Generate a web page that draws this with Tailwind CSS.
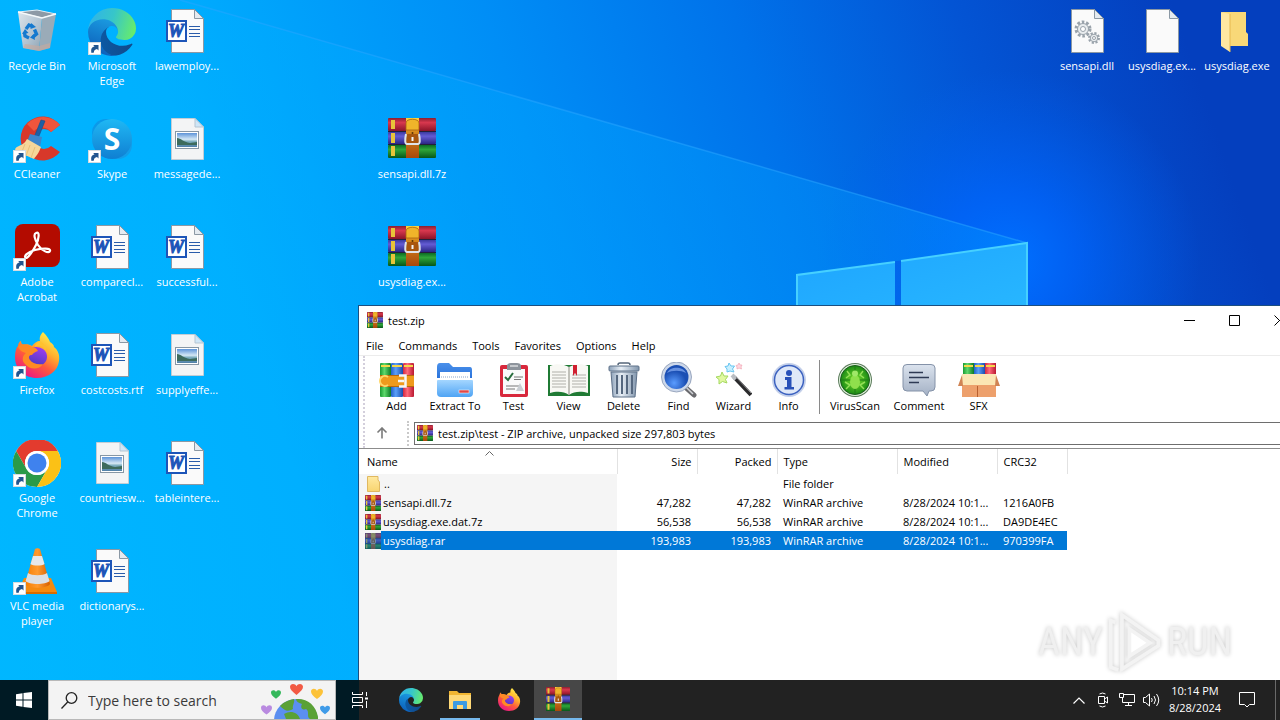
<!DOCTYPE html>
<html lang="en">
<head>
  <meta charset="UTF-8">
  <title>Desktop</title>
  <script src="https://cdn.jsdelivr.net/npm/@tailwindcss/browser@4"></script>
</head>
<body class="h-screen flex flex-col overflow-hidden bg-[#00aeff] font-['Open_Sans',sans-serif] text-[11px] leading-[15px] text-black">

  <!-- Icon sprite -->
  <svg width="0" height="0" class="absolute" aria-hidden="true">
    <defs>
      <linearGradient id="edgeGreen" x1="0" y1="0.3" x2="1" y2="0.5"><stop offset="0" stop-color="#2fb3ea"/><stop offset=".5" stop-color="#37c6c9"/><stop offset="1" stop-color="#66eb6e"/></linearGradient>
      <linearGradient id="edgeBlue" x1="0.6" y1="0" x2="0.3" y2="1"><stop offset="0" stop-color="#1b9de2"/><stop offset="1" stop-color="#0c5cb8"/></linearGradient>
      <linearGradient id="edgeDark" x1="0" y1="0.5" x2="1" y2="0.5"><stop offset="0" stop-color="#0c59a4"/><stop offset="1" stop-color="#114a8b"/></linearGradient>
      <linearGradient id="ffBody" x1="0.85" y1="0.05" x2="0.25" y2="1"><stop offset="0" stop-color="#fff44f"/><stop offset=".35" stop-color="#ffb02e"/><stop offset=".62" stop-color="#ff5a3c"/><stop offset="1" stop-color="#e8128a"/></linearGradient>
      <linearGradient id="ffCore" x1="0.7" y1="0" x2="0.3" y2="1"><stop offset="0" stop-color="#a03cf0"/><stop offset="1" stop-color="#4a3ac0"/></linearGradient>
      <linearGradient id="bookRed" x2="0" y2="1"><stop offset="0" stop-color="#8c1f30"/><stop offset=".35" stop-color="#d8384e"/><stop offset="1" stop-color="#8c1428"/></linearGradient>
      <linearGradient id="bookBlue" x2="0" y2="1"><stop offset="0" stop-color="#3a3aa0"/><stop offset=".35" stop-color="#645cd4"/><stop offset="1" stop-color="#2b2684"/></linearGradient>
      <linearGradient id="bookGreen" x2="0" y2="1"><stop offset="0" stop-color="#0b6b24"/><stop offset=".35" stop-color="#2fa63a"/><stop offset="1" stop-color="#07561a"/></linearGradient>
      <linearGradient id="belt" x2="0" y2="1"><stop offset="0" stop-color="#ffd23c"/><stop offset=".35" stop-color="#d88a1c"/><stop offset="1" stop-color="#a8480c"/></linearGradient>
      <linearGradient id="binSide" x2="1" y2="1"><stop offset="0" stop-color="#dde5eb"/><stop offset=".6" stop-color="#b0c2d0"/><stop offset="1" stop-color="#8fa2b2"/></linearGradient>
      <linearGradient id="skype" x2="0" y2="1"><stop offset="0" stop-color="#20b8f4"/><stop offset="1" stop-color="#0f7fd2"/></linearGradient>
      <linearGradient id="photo" x2="0" y2="1"><stop offset="0" stop-color="#5d93d8"/><stop offset=".45" stop-color="#d5e8f5"/><stop offset=".6" stop-color="#7fb0c0"/><stop offset="1" stop-color="#4f7fa8"/></linearGradient>
      <linearGradient id="cone" x2="1" y2="0"><stop offset="0" stop-color="#f57c00"/><stop offset=".5" stop-color="#ff9a2e"/><stop offset="1" stop-color="#d65f00"/></linearGradient>
      <linearGradient id="extract" x2="0" y2="1"><stop offset="0" stop-color="#4a90ea"/><stop offset="1" stop-color="#2b74dc"/></linearGradient>
      <linearGradient id="extractFront" x2="0" y2="1"><stop offset="0" stop-color="#a4d6ff"/><stop offset="1" stop-color="#4fa4f4"/></linearGradient>
      <linearGradient id="metal" x2="1" y2="0"><stop offset="0" stop-color="#8fa3ba"/><stop offset=".4" stop-color="#e8eff6"/><stop offset="1" stop-color="#8195ac"/></linearGradient>
      <linearGradient id="bubble" x2="0" y2="1"><stop offset="0" stop-color="#dbe3ee"/><stop offset="1" stop-color="#a3b0c4"/></linearGradient>
      <radialGradient id="lens" cx=".4" cy=".75"><stop offset="0" stop-color="#5a9cff"/><stop offset="1" stop-color="#1b4fb4"/></radialGradient>
      <radialGradient id="scan"><stop offset="0" stop-color="#7be22a"/><stop offset="1" stop-color="#1b8a16"/></radialGradient>
      <linearGradient id="tubeG" x2="1" y2="0"><stop offset="0" stop-color="#1a9a32"/><stop offset=".4" stop-color="#5fd86c"/><stop offset="1" stop-color="#0d7a24"/></linearGradient>
      <linearGradient id="tubeB" x2="1" y2="0"><stop offset="0" stop-color="#2460c8"/><stop offset=".4" stop-color="#5ca0f8"/><stop offset="1" stop-color="#1a4cae"/></linearGradient>
      <linearGradient id="tubeR" x2="1" y2="0"><stop offset="0" stop-color="#d02840"/><stop offset=".4" stop-color="#ff6a7c"/><stop offset="1" stop-color="#b81830"/></linearGradient>
      <linearGradient id="gold" x2="0" y2="1"><stop offset="0" stop-color="#ffe9a0"/><stop offset="1" stop-color="#f8d470"/></linearGradient>
    </defs>

    <symbol id="shortcut" viewBox="0 0 13 13">
      <rect x=".5" y=".5" width="12" height="12" fill="#fff" stroke="#d5dbe0"/>
      <path d="M3.500 11C2.500 7 4 5 6.500 4.600L5.200 3H10.500V8.500L9 7C7 7.400 5.600 8.600 6 10.500Z" fill="#22558f"/>
    </symbol>

    <symbol id="recycle" viewBox="0 0 48 48">
      <path d="M5 4L24 2L43 6L29 10Z" fill="#8d9aa6" stroke="#e6edf2"/>
      <path d="M5 4L29 10L26 43L10 40Z" fill="url(#binSide)"/>
      <path d="M29 10L43 6L37 40L26 43Z" fill="#9aabb8"/>
      <path d="M12 36L26 38L37 35L37 40L26 43L10 40Z" fill="#c9aa9c" opacity=".6"/>
      <path d="M5 4L29 10L43 6" fill="none" stroke="#f5f9fb" stroke-width="1.500"/>
      <g fill="none" stroke="#1479cf" stroke-width="3.400">
        <path d="M13 21L16 17L19.500 18.500"/><path d="M21.500 21.500L23.500 26L20 29"/><path d="M16 30L12 28L11.500 24"/>
      </g>
      <path d="M18 15L23 19L17.500 21ZM22 32L17 29.500L21 26ZM9 26L12 21L15.500 25Z" fill="#1479cf"/>
    </symbol>

    <symbol id="edge" viewBox="0 0 256 256">
      <g transform="translate(-4.630 -4.920)">
        <path fill="url(#edgeDark)" d="M235.680,195.460a93.730,93.730,0,0,1-10.540,4.710,101.870,101.870,0,0,1-35.900,6.460c-47.320,0-88.540-32.550-88.540-74.320A31.480,31.480,0,0,1,117.130,105c-42.800,1.800-53.800,46.400-53.800,72.530,0,73.880,68.090,81.370,82.760,81.370,7.910,0,19.840-2.300,27-4.560l1.310-.44A128.340,128.340,0,0,0,241,201.100,4,4,0,0,0,235.680,195.460Z"/>
        <path fill="url(#edgeBlue)" d="M110.340,246.340A79.200,79.200,0,0,1,87.600,225,80.720,80.720,0,0,1,117.130,105c3.120-1.470,8.450-4.130,15.540-4a32.350,32.350,0,0,1,25.690,13,31.880,31.880,0,0,1,6.360,18.660c0-.21,24.460-79.600-80-79.600-43.900,0-80,41.660-80,78.210a130.150,130.150,0,0,0,12.110,56,128,128,0,0,0,156.380,67.110,75.550,75.550,0,0,1-62.780-8Z"/>
        <path fill="url(#edgeGreen)" d="M156.940,153.780c-.81,1.050-3.300,2.500-3.300,5.660,0,2.610,1.700,5.120,4.720,7.230,14.380,10,41.490,8.680,41.560,8.680A59.560,59.560,0,0,0,230.180,167a61.380,61.380,0,0,0,30.430-52.880c.26-22.410-8-37.310-11.340-43.910C228.090,28.760,182.350,5,132.610,5a128,128,0,0,0-128,126.200C5.090,94.650,41.360,65.130,84.630,65.130c3.510,0,23.460.34,42,10.070,16.340,8.580,24.900,18.940,30.850,29.210,6.180,10.670,7.280,24.150,7.280,29.520S162,147.200,156.940,153.780Z"/>
      </g>
    </symbol>

    <symbol id="page" viewBox="0 0 48 48">
      <path d="M8.500 1.500H31.500L40.500 10.500V44.500H8.500Z" fill="#fafafa" stroke="#8b98a4"/>
      <path d="M31.500 1.500V10.500H40.500Z" fill="#e4eaf0" stroke="#8b98a4"/>
    </symbol>

    <symbol id="word" viewBox="0 0 48 48">
      <use href="#page"/>
      <rect x="3" y="12" width="21" height="22" fill="#1d55b8"/>
      <rect x="5" y="14" width="17" height="18" fill="#fff"/>
      <path d="M26 18.500H37M26 21.500H37M26 25.500H37M26 28.500H37" stroke="#2a5caa"/>
    </symbol>

    <symbol id="picture" viewBox="0 0 48 48">
      <path d="M8.500 2.500H32L40.500 11V43.500H8.500Z" fill="#f3f4f5" stroke="#c3cdd5"/>
      <path d="M32 2.500V11H40.500Z" fill="#cfe6f7" stroke="#b5c5d2"/>
      <rect x="12.500" y="15.500" width="23" height="17" fill="#fff" stroke="#8797a5"/>
      <rect x="14" y="17" width="20" height="14" fill="url(#photo)"/>
      <path d="M14 22C18 22 20 26 27 27L34 26V29H14Z" fill="#3d6b5c"/>
    </symbol>

    <symbol id="ccleaner" viewBox="0 0 48 48">
      <path d="M47 9A22 22 0 1 0 47 36L38 30A10 10 0 1 1 38 16Z" fill="#d8382a"/>
      <path d="M47 9A22 22 0 0 0 14 8L21 15A11 11 0 0 1 38 16Z" fill="#f0553c"/>
      <path d="M28 4L32 5L24 25L20 24Z" fill="#1d5fa5" stroke="#174c86" stroke-width=".6"/>
      <path d="M17 18L29 21L27 31L14 26Z" fill="#3c86cc"/>
      <path d="M14 23L28 31C26 37 23 40 21 43L3 35C1 33 3 31 6 30C10 28 12 27 14 23Z" fill="#f6d79a"/>
      <path d="M12 28L8 38M17 29L13 40M22 31L18 42" stroke="#e8c07a"/>
    </symbol>

    <symbol id="skypeIcon" viewBox="0 0 48 48">
      <circle cx="18" cy="17" r="14" fill="#0f8fe0" opacity=".7"/>
      <circle cx="30" cy="29" r="14" fill="#1699e4" opacity=".8"/>
      <circle cx="24" cy="23" r="20" fill="url(#skype)"/>
    </symbol>

    <symbol id="acrobat" viewBox="0 0 48 48">
      <rect x="2" y="0" width="45" height="43" rx="8" fill="#b30b00"/>
      <path d="M23 9C27 7 26 15 23 21C20 27 15 34 13 34C10 33 14 28 22 26C30 24 38 24 37 27C36 30 29 27 25 21C22 16 20 10 23 9Z" fill="none" stroke="#fff" stroke-width="2.200"/>
    </symbol>

    <symbol id="firefox" viewBox="0 -1 48 48">
      <path d="M30 -1C34 3 36 6 37 9C39 10 41 12 41 14C45 17 47 22 46 28C45 38 35 45 24 45C11 45 2 36 2 24C2 19 3 15 5 13C5 10 7 8 8 8C8 10 9 11 10 12C12 11 16 11 19 13C21 10 24 8 27 8C26 4 28 1 30 -1Z" fill="url(#ffBody)"/>
      <path d="M13 20C16 14 24 12 30 16C36 20 35 29 29 32C22 34 15 30 13 20Z" fill="url(#ffCore)"/>
      <path d="M5 13C9 10 15 11 19 14C22 14 24 16 25 18C22 19 20 20 19 22C16 22 15 24 17 27C19 30 24 32 30 31C26 37 17 37 12 31C8 27 10 22 13 20C9 19 6 17 5 13Z" fill="#ff8a24"/>
      <path d="M27 8C31 11 33 13 33 17C29 12 25 12 22 14C22 12 24 9 27 8Z" fill="#ffc22e"/>
    </symbol>

    <symbol id="chrome" viewBox="0 0 48 48">
      <circle cx="24" cy="23" r="24" fill="#fff"/>
      <path d="M3.200 11A24 24 0 0 1 44.800 11H24A12 12 0 0 0 13.600 29Z" fill="#e33b2e"/>
      <path d="M3.200 11A24 24 0 0 0 24 47L34.400 29A12 12 0 0 1 13.600 29Z" fill="#2a9a48"/>
      <path d="M44.800 11A24 24 0 0 1 24 47L34.400 29A12 12 0 0 0 24 11Z" fill="#fbc116"/>
      <circle cx="24" cy="23" r="12" fill="#fff"/>
      <circle cx="24" cy="23" r="9.500" fill="#3f82ee"/>
    </symbol>

    <symbol id="vlc" viewBox="0 0 48 48">
      <path d="M11 30H38L44 44C44 46 43 46 42 46H7C5 46 5 45 5 44Z" fill="#f58a10"/>
      <path d="M5 44H44V46H5Z" fill="#d86c00"/>
      <path d="M22 1C23 0 26 0 27 1L37 36C34 41 15 41 12 36Z" fill="url(#cone)"/>
      <path d="M20 8H29L31.500 16C29 18 20 18 17.500 16Z" fill="#e6e8ea"/>
      <path d="M15 25C19 28 30 28 34 25L36.500 33C33 37 16 37 12.600 33Z" fill="#dddfe2"/>
    </symbol>

    <symbol id="dll" viewBox="0 0 48 48">
      <use href="#page"/>
      <circle cx="20" cy="21" r="6.500" fill="none" stroke="#9aa3ab" stroke-width="4" stroke-dasharray="2.400 1.700"/>
      <circle cx="20" cy="21" r="5.500" fill="#e9ecee" stroke="#9aa3ab"/>
      <circle cx="20" cy="21" r="2.500" fill="#fff" stroke="#9aa3ab"/>
      <circle cx="31" cy="30" r="4.500" fill="none" stroke="#9aa3ab" stroke-width="3" stroke-dasharray="2 1.500"/>
      <circle cx="31" cy="30" r="3.800" fill="#e9ecee" stroke="#9aa3ab"/>
      <circle cx="31" cy="30" r="1.500" fill="#fff" stroke="#9aa3ab"/>
    </symbol>

    <symbol id="folderOpen" viewBox="0 0 48 48">
      <path d="M9 4H33V24L35 26V38H17Z" fill="#f8d878"/>
      <path d="M8 4L17 6V44L8 38Z" fill="#ffe7a2"/>
      <path d="M17 6V44" stroke="#e5b84e"/>
    </symbol>

    <symbol id="winrar" viewBox="0 2 48 40" preserveAspectRatio="none">
      <rect x="0" y="2" width="48" height="13" rx="1" fill="url(#bookRed)"/>
      <rect x="0" y="16" width="48" height="12" rx="1" fill="url(#bookBlue)"/>
      <rect x="0" y="29" width="48" height="13" rx="1" fill="url(#bookGreen)"/>
      <path d="M3 4H7V13H3ZM3 17H7V27H3ZM3 30H7V40H3Z" fill="#e8c43a"/>
      <path d="M0 15.500H48M0 28.500H48" stroke="#24203a"/>
      <path d="M18 2H31V42H18Z" fill="url(#belt)"/>
      <path d="M18 7C18 2 31 2 31 7V14H18Z" fill="#f0b42a" stroke="#a86010" stroke-width=".8"/>
      <path d="M18 18Q16 28 19 28H30Q33 28 31 18" fill="#a8560e" stroke="#dfe3e8" stroke-width="2"/>
      <path d="M24.500 21V25" stroke="#f4f6f8" stroke-width="2"/>
      <circle cx="24.500" cy="17" r="1" fill="#5a3408"/>
    </symbol>

    <symbol id="tubes" viewBox="0 0 36 36">
      <rect x="1" y="1" width="11" height="34" rx="1" fill="url(#tubeG)"/>
      <rect x="12" y="1" width="12" height="34" rx="1" fill="url(#tubeB)"/>
      <rect x="24" y="1" width="11" height="34" rx="1" fill="url(#tubeR)"/>
      <path d="M2 3H11V5H2ZM13 3H23V5H13ZM25 3H34V5H25Z" fill="#f6d84a"/>
    </symbol>

    <symbol id="add" viewBox="0 0 36 36">
      <use href="#tubes"/>
      <rect x="1" y="13" width="34" height="12" fill="#ef9a1c"/>
      <path d="M1 13.500H35M1 24.500H35" stroke="#b8680c"/>
      <path d="M9 15A5 5 0 1 0 9 23" fill="none" stroke="#ffd76a" stroke-width="2"/>
      <path d="M20 13.500H26.500V24.500H20M19 19H25" fill="none" stroke="#f5f7f9" stroke-width="2.500"/>
    </symbol>

    <symbol id="extractTo" viewBox="0 0 38 36">
      <path d="M1 5Q1 1 4 1H13L17 5H34Q36 5 36 8V16H1Z" fill="url(#extract)"/>
      <path d="M4 10H34V20H4Z" fill="#fff"/>
      <path d="M5 15H33" stroke="#8aa4c8" stroke-dasharray="1 1"/>
      <path d="M1 19Q1 18 2 18H36Q37 18 37 19V31Q37 35 33 35H5Q1 35 1 31Z" fill="url(#extractFront)"/>
      <rect x="23" y="28" width="10" height="3" fill="#e04848" stroke="#fff" stroke-width=".5"/>
    </symbol>

    <symbol id="test" viewBox="0 0 30 36">
      <rect x="1" y="3" width="28" height="32" rx="2" fill="#d8283c"/>
      <rect x="4" y="7" width="22" height="25" fill="#fafafa"/>
      <path d="M8 3Q9 1 12 1H18Q21 1 22 3V8H8Z" fill="#8d949c"/>
      <path d="M11 4H19" stroke="#fff"/>
      <path d="M6 15L9 18L14 11" fill="none" stroke="#2a6e3e" stroke-width="2"/>
      <path d="M15 15H24M15 17.500H22M7 24H20M7 27H16" stroke="#777"/>
      <path d="M17 29L21 21L25 29Z" fill="#c9cdd2"/>
    </symbol>

    <symbol id="view" viewBox="0 0 42 36">
      <path d="M0 3H42V34H0Z" fill="#1f7a34"/>
      <path d="M2 4C8 1 16 2 21 5C26 2 34 1 40 4V31C34 29 26 29 21 33C16 29 8 29 2 31Z" fill="#f8f8f4"/>
      <path d="M21 5V33" stroke="#8a8a80"/>
      <path d="M4 10H18M4 13H18M4 16H18M4 19H18M4 22H18M4 25H18M24 13H38M24 16H38M24 19H38M24 22H38M24 25H38" stroke="#b0b0aa"/>
      <path d="M25 3H29V14L27 11L25 14Z" fill="#d02030"/>
    </symbol>

    <symbol id="delete" viewBox="0 0 32 36">
      <path d="M10 3Q10 1 12 1H20Q22 1 22 3" fill="none" stroke="#55667a" stroke-width="1.500"/>
      <rect x="1" y="4" width="30" height="5" rx="1" fill="url(#metal)" stroke="#5d7088"/>
      <path d="M3 10H29L27 35H5Z" fill="url(#metal)" stroke="#5d7088"/>
      <path d="M9 13V32M14 13V32M19 13V32M24 13V32" stroke="#56687f" stroke-width="2"/>
    </symbol>

    <symbol id="find" viewBox="0 0 36 36">
      <path d="M24 25L33 33" stroke="#6a6a6e" stroke-width="5" stroke-linecap="round"/>
      <path d="M25 25L32 32" stroke="#d0d2d6" stroke-width="1.500"/>
      <circle cx="15.500" cy="15" r="15" fill="#cdd8ea" stroke="#8796b0" stroke-width=".8"/>
      <circle cx="15.500" cy="15" r="12" fill="url(#lens)"/>
      <path d="M6 11C9 4 22 4 25 11C20 8 11 8 6 11Z" fill="#9cc0ff" opacity=".6"/>
    </symbol>

    <symbol id="wizard" viewBox="0 0 36 36">
      <path d="M18 15L35 33" stroke="#2a2a2c" stroke-width="4"/>
      <path d="M16 13L20 17" stroke="#b9bdc2" stroke-width="4"/>
      <path d="M20 15L35 31" stroke="#8a8a8c"/>
      <path d="M6 10L8 14L12 14L9.500 17.500L11 21L6.500 19.500L3 22L3 17.500L0 15L4.500 14Z" fill="#e0f8a0" stroke="#a4d860"/>
      <path d="M13 1L15 4L18.500 4L16.500 7L18 10L14 9L11 10L11 7L9 4.500L12 4Z" fill="#c8f0ff" stroke="#68c4f0"/>
      <path d="M23 1L24 3L26 3L25 5L25.500 7L23 6L21 7L21 5L20 3.500L22 3Z" fill="#ffd8e0" stroke="#f0a8b4" stroke-width=".7"/>
    </symbol>

    <symbol id="info" viewBox="0 0 36 36">
      <circle cx="18" cy="18" r="17" fill="#c4d0ea"/>
      <circle cx="18" cy="18" r="14.500" fill="#dfe8f8" stroke="#3c62c0" stroke-width="1.500"/>
      <circle cx="18" cy="11" r="3" fill="#2850b8"/>
      <path d="M14 15H20.500V25H23V27.500H13.500V25H16V18H14Z" fill="#2850b8"/>
    </symbol>

    <symbol id="virus" viewBox="0 0 36 36">
      <circle cx="18" cy="18" r="17" fill="#5a7a5a"/>
      <circle cx="18" cy="18" r="16" fill="#e0f0dc"/>
      <circle cx="18" cy="18" r="14.500" fill="url(#scan)" stroke="#1c5c1c"/>
      <path d="M3.500 18H32.500M18 3.500V32.500" stroke="#1e7a18"/>
      <path d="M10 9L13 13L9 16M26 9L23 13L27 16M9 27L13 23L8 20M27 27L23 23L28 20" fill="none" stroke="#94e058" stroke-width="1.500"/>
      <ellipse cx="18" cy="20" rx="5" ry="7" fill="#8fe04c"/>
      <circle cx="18" cy="11.500" r="3" fill="#a0e868"/>
    </symbol>

    <symbol id="comment" viewBox="0 0 36 36">
      <path d="M6 2.500H30Q34 2.500 34 6V25Q34 29 30 29H28L26 34L22 29H6Q2 29 2 25V6Q2 2.500 6 2.500Z" fill="url(#bubble)" stroke="#8492a8"/>
      <path d="M8 10.500H22M8 15.500H28M8 20.500H18" stroke="#2e3a54" stroke-width="1.600"/>
    </symbol>

    <symbol id="sfx" viewBox="0 0 42 36">
      <rect x="5" y="1" width="11" height="14" fill="url(#tubeG)"/>
      <rect x="16" y="1" width="11" height="14" fill="url(#tubeB)"/>
      <rect x="27" y="1" width="11" height="14" fill="url(#tubeR)"/>
      <path d="M6 3H15V5H6ZM17 3H26V5H17ZM28 3H37V5H28Z" fill="#f6d84a"/>
      <path d="M4 12H38V35H4Z" fill="#eda06c"/>
      <path d="M4 12H38L39 23H3Z" fill="#fbe6b4"/>
      <path d="M4 13L0 24H5ZM38 13L42 24H37Z" fill="#d08454"/>
      <path d="M19.500 24V35" stroke="#b86030"/>
    </symbol>

    <symbol id="explorer" viewBox="0 0 24 24">
      <path d="M1 3H9L11 5H23V21H1Z" fill="#f2b632"/>
      <path d="M1 7H23V21H1Z" fill="#ffd977"/>
      <path d="M5 21V14Q5 13 6 13H18Q19 13 19 14V21H15V17H9V21Z" fill="#3c9be2"/>
    </symbol>

    <symbol id="heart" viewBox="0 0 12 12">
      <path d="M6 11C2 8 0 6 0 3.500C0 0 5 0 6 3C7 0 12 0 12 3.500C12 6 10 8 6 11Z"/>
    </symbol>
  </svg>

  <!-- Desktop -->
  <main class="relative flex-1 min-h-0 overflow-hidden">
    <svg class="absolute inset-0 w-full h-full" viewBox="0 0 1280 680" preserveAspectRatio="xMinYMin slice" aria-hidden="true">
      <defs>
        <linearGradient id="sky" x1="0" y1="620" x2="1240" y2="200" gradientUnits="userSpaceOnUse">
          <stop offset="0" stop-color="#00b8ff"/><stop offset=".25" stop-color="#00b0ff"/><stop offset=".5" stop-color="#008ef6"/><stop offset=".68" stop-color="#0072ea"/><stop offset=".84" stop-color="#0354d4"/><stop offset="1" stop-color="#043fbe"/>
        </linearGradient>
        <radialGradient id="glow" cx="1010" cy="260" r="190" gradientUnits="userSpaceOnUse">
          <stop offset="0" stop-color="#0070ff"/><stop offset=".35" stop-color="#0066ff" stop-opacity=".7"/><stop offset="1" stop-color="#0060f0" stop-opacity="0"/>
        </radialGradient>
        <linearGradient id="beam" x2="1" y2="0"><stop offset="0" stop-color="#00b4ff"/><stop offset="1" stop-color="#009cff"/></linearGradient>
        <linearGradient id="pane" x2="1" y2="1"><stop offset="0" stop-color="#1ea4ff"/><stop offset="1" stop-color="#28b8ff"/></linearGradient>
      </defs>
      <rect width="1280" height="680" fill="url(#sky)"/>
      <rect width="1280" height="680" fill="url(#glow)"/>
      <path d="M180 0L1027 243L796 275V680H0V0Z" fill="url(#beam)" opacity=".35"/>
      <path d="M180 0L1027 243" stroke="#2ba6ff" stroke-width="1.500" opacity=".5"/>
      <path d="M797 275L895 262V320H797ZM901 261L1027 243V320H901Z" fill="url(#pane)"/>
      <path d="M797 320V275L895 262M901 261L1027 243V320" fill="none" stroke="#46d0ff" stroke-width="2"/>
    </svg>

    <!-- Desktop icons -->
    <div class="relative grid grid-cols-[repeat(17,75px)] auto-rows-[108px] text-white text-center">
      <a href="#" class="col-start-1 row-start-1 flex flex-col items-center pt-2 pr-px"><svg class="size-12 shrink-0"><use href="#recycle"/></svg><span class="mt-0.5 px-1">Recycle Bin</span></a>
      <a href="#" class="col-start-1 row-start-2 relative flex flex-col items-center pt-2 pr-px"><svg class="size-12 shrink-0"><use href="#ccleaner"/></svg><svg class="absolute left-[13px] top-[42px] size-[13px]"><use href="#shortcut"/></svg><span class="mt-0.5 px-1">CCleaner</span></a>
      <a href="#" class="col-start-1 row-start-3 relative flex flex-col items-center pt-2 pr-px"><svg class="size-12 shrink-0"><use href="#acrobat"/></svg><svg class="absolute left-[13px] top-[42px] size-[13px]"><use href="#shortcut"/></svg><span class="mt-0.5 px-1">Adobe Acrobat</span></a>
      <a href="#" class="col-start-1 row-start-4 relative flex flex-col items-center pt-2 pr-px"><svg class="size-12 shrink-0"><use href="#firefox"/></svg><svg class="absolute left-[13px] top-[42px] size-[13px]"><use href="#shortcut"/></svg><span class="mt-0.5 px-1">Firefox</span></a>
      <a href="#" class="col-start-1 row-start-5 relative flex flex-col items-center pt-2 pr-px"><svg class="size-12 shrink-0"><use href="#chrome"/></svg><svg class="absolute left-[13px] top-[42px] size-[13px]"><use href="#shortcut"/></svg><span class="mt-0.5 px-1">Google Chrome</span></a>
      <a href="#" class="col-start-1 row-start-6 relative flex flex-col items-center pt-2 pr-px"><svg class="size-12 shrink-0"><use href="#vlc"/></svg><svg class="absolute left-[13px] top-[42px] size-[13px]"><use href="#shortcut"/></svg><span class="mt-0.5 px-1">VLC media player</span></a>

      <a href="#" class="col-start-2 row-start-1 relative flex flex-col items-center pt-2 pr-px"><svg class="size-12 shrink-0"><use href="#edge"/></svg><svg class="absolute left-[13px] top-[42px] size-[13px]"><use href="#shortcut"/></svg><span class="mt-0.5 px-1">Microsoft Edge</span></a>
      <a href="#" class="col-start-2 row-start-2 relative flex flex-col items-center pt-2 pr-px"><svg class="size-12 shrink-0"><use href="#skypeIcon"/><text x="24" y="34" text-anchor="middle" class="text-[30px] font-bold fill-white">S</text></svg><svg class="absolute left-[13px] top-[42px] size-[13px]"><use href="#shortcut"/></svg><span class="mt-0.5 px-1">Skype</span></a>
      <a href="#" class="col-start-2 row-start-3 flex flex-col items-center pt-2 pr-px"><svg class="size-12 shrink-0"><use href="#word"/><text x="13" y="29" text-anchor="middle" class="font-['Liberation_Serif',serif] text-[18px] font-bold italic fill-[#1d55b8] stroke-[#1d55b8]">W</text></svg><span class="mt-0.5">comparecl...</span></a>
      <a href="#" class="col-start-2 row-start-4 flex flex-col items-center pt-2 pr-px"><svg class="size-12 shrink-0"><use href="#word"/><text x="13" y="29" text-anchor="middle" class="font-['Liberation_Serif',serif] text-[18px] font-bold italic fill-[#1d55b8] stroke-[#1d55b8]">W</text></svg><span class="mt-0.5">costcosts.rtf</span></a>
      <a href="#" class="col-start-2 row-start-5 flex flex-col items-center pt-2 pr-px"><svg class="size-12 shrink-0"><use href="#picture"/></svg><span class="mt-0.5">countriesw...</span></a>
      <a href="#" class="col-start-2 row-start-6 flex flex-col items-center pt-2 pr-px"><svg class="size-12 shrink-0"><use href="#word"/><text x="13" y="29" text-anchor="middle" class="font-['Liberation_Serif',serif] text-[18px] font-bold italic fill-[#1d55b8] stroke-[#1d55b8]">W</text></svg><span class="mt-0.5">dictionarys...</span></a>

      <a href="#" class="col-start-3 row-start-1 flex flex-col items-center pt-2 pr-px"><svg class="size-12 shrink-0"><use href="#word"/><text x="13" y="29" text-anchor="middle" class="font-['Liberation_Serif',serif] text-[18px] font-bold italic fill-[#1d55b8] stroke-[#1d55b8]">W</text></svg><span class="mt-0.5">lawemploy...</span></a>
      <a href="#" class="col-start-3 row-start-2 flex flex-col items-center pt-2 pr-px"><svg class="size-12 shrink-0"><use href="#picture"/></svg><span class="mt-0.5">messagede...</span></a>
      <a href="#" class="col-start-3 row-start-3 flex flex-col items-center pt-2 pr-px"><svg class="size-12 shrink-0"><use href="#word"/><text x="13" y="29" text-anchor="middle" class="font-['Liberation_Serif',serif] text-[18px] font-bold italic fill-[#1d55b8] stroke-[#1d55b8]">W</text></svg><span class="mt-0.5">successful...</span></a>
      <a href="#" class="col-start-3 row-start-4 flex flex-col items-center pt-2 pr-px"><svg class="size-12 shrink-0"><use href="#picture"/></svg><span class="mt-0.5">supplyeffe...</span></a>
      <a href="#" class="col-start-3 row-start-5 flex flex-col items-center pt-2 pr-px"><svg class="size-12 shrink-0"><use href="#word"/><text x="13" y="29" text-anchor="middle" class="font-['Liberation_Serif',serif] text-[18px] font-bold italic fill-[#1d55b8] stroke-[#1d55b8]">W</text></svg><span class="mt-0.5">tableintere...</span></a>

      <a href="#" class="col-start-6 row-start-2 flex flex-col items-center pt-2 pr-px"><svg class="w-12 h-10 mt-0.5 mb-1.5 shrink-0"><use href="#winrar"/></svg><span class="mt-0.5">sensapi.dll.7z</span></a>
      <a href="#" class="col-start-6 row-start-3 flex flex-col items-center pt-2 pr-px"><svg class="w-12 h-10 mt-0.5 mb-1.5 shrink-0"><use href="#winrar"/></svg><span class="mt-0.5">usysdiag.ex...</span></a>

      <a href="#" class="col-start-15 row-start-1 flex flex-col items-center pt-2 pr-px"><svg class="size-12 shrink-0"><use href="#dll"/></svg><span class="mt-0.5">sensapi.dll</span></a>
      <a href="#" class="col-start-16 row-start-1 flex flex-col items-center pt-2 pr-px"><svg class="size-12 shrink-0"><use href="#page"/></svg><span class="mt-0.5">usysdiag.ex...</span></a>
      <a href="#" class="col-start-17 row-start-1 flex flex-col items-center pt-2 pr-px"><svg class="size-12 shrink-0"><use href="#folderOpen"/></svg><span class="mt-0.5">usysdiag.exe</span></a>
    </div>

    <!-- WinRAR window -->
    <section class="absolute left-[358px] top-[305px] -right-[22px] bottom-0 flex flex-col bg-white border-t border-l border-[#1c4f80]" aria-label="test.zip">
      <header class="flex items-center h-[30px] pb-0.5 pl-2">
        <svg class="size-4 mr-[5px]"><use href="#winrar"/></svg>
        <h1>test.zip</h1>
        <div class="ml-auto flex h-full">
          <button aria-label="Minimize" class="w-[45px] grid place-items-center"><svg width="11" height="11"><path d="M0 5.500H11" stroke="#000"/></svg></button>
          <button aria-label="Maximize" class="w-[45px] grid place-items-center"><svg width="11" height="11"><path d="M.5 .5H10.500V10.500H.5Z" fill="none" stroke="#000"/></svg></button>
          <button aria-label="Close" class="w-[45px] grid place-items-center"><svg width="11" height="11"><path d="M.5 .5L10.500 10.500M10.500 .5L.5 10.500" stroke="#000"/></svg></button>
        </div>
      </header>

      <nav class="flex items-center h-5 pl-[7px] gap-[15px] border-b border-[#ececec]">
        <button>File</button>
        <button>Commands</button>
        <button>Tools</button>
        <button>Favorites</button>
        <button>Options</button>
        <button>Help</button>
      </nav>

      <!-- Toolbar -->
      <div class="ml-1 pl-1 border-l-2 border-dotted border-[#d3cfdc]">
        <div class="flex h-16 pt-1.5">
          <button class="w-[55px] flex flex-col items-center"><svg class="size-9"><use href="#add"/></svg><span>Add</span></button>
          <button class="w-[62px] flex flex-col items-center"><svg class="w-[38px] h-9"><use href="#extractTo"/></svg><span>Extract To</span></button>
          <button class="w-[55px] flex flex-col items-center"><svg class="w-[30px] h-9"><use href="#test"/></svg><span>Test</span></button>
          <button class="w-[55px] flex flex-col items-center"><svg class="w-[42px] h-9"><use href="#view"/></svg><span>View</span></button>
          <button class="w-[55px] flex flex-col items-center"><svg class="w-8 h-9"><use href="#delete"/></svg><span>Delete</span></button>
          <button class="w-[55px] flex flex-col items-center"><svg class="size-9"><use href="#find"/></svg><span>Find</span></button>
          <button class="w-[55px] flex flex-col items-center"><svg class="size-9"><use href="#wizard"/></svg><span>Wizard</span></button>
          <button class="w-[55px] flex flex-col items-center"><svg class="size-9"><use href="#info"/></svg><span>Info</span></button>
          <div class="h-[54px] w-px mx-[3px] -mt-0.5 bg-[#8a8a8a]"></div>
          <button class="w-16 flex flex-col items-center"><svg class="size-9"><use href="#virus"/></svg><span>VirusScan</span></button>
          <button class="w-16 flex flex-col items-center"><svg class="size-9"><use href="#comment"/></svg><span>Comment</span></button>
          <button class="w-[55px] flex flex-col items-center"><svg class="w-[42px] h-9"><use href="#sfx"/></svg><span>SFX</span></button>
        </div>
        <div class="flex items-center h-7 pb-0.5">
          <button aria-label="Up" class="w-[38px] pr-3 grid place-items-center"><svg width="12" height="12"><path d="M6 11.500V1M1.500 5.500L6 1L10.500 5.500" fill="none" stroke="#7a7a7a" stroke-width="1.600"/></svg></button>
          <div class="flex-1 flex items-center h-[25px] pl-[5px] border-l-2 border-dotted border-[#c9c9c9]">
            <label class="flex flex-1 items-center h-[23px] pl-0.5 gap-[5px] border border-[#6e6e6e]">
              <svg class="size-4"><use href="#winrar"/></svg>
              <input aria-label="Address" class="flex-1 outline-none" value="test.zip\test - ZIP archive, unpacked size 297,803 bytes">
            </label>
          </div>
        </div>
      </div>

      <!-- File list -->
      <div class="relative flex-1 min-h-0 overflow-hidden border-t border-[#8c8c8c] bg-no-repeat bg-[length:258px_100%] bg-[linear-gradient(#f5f5f5,#f5f5f5)]">
        <div class="absolute inset-x-0 top-0 h-[25px] bg-white"></div>
        <table class="relative table-fixed w-[708px] text-left whitespace-nowrap">
          <colgroup>
            <col class="w-[258px]"><col class="w-20"><col class="w-20"><col class="w-[120px]"><col class="w-[100px]"><col class="w-[70px]">
          </colgroup>
          <thead>
            <tr class="h-[25px]">
              <th class="relative font-normal pl-2 border-r border-[#e2e2e2]">Name
                <svg class="absolute top-0.5 left-[126px]" width="9" height="5"><path d="M.5 4.500L4.500 .5L8.500 4.500" fill="none" stroke="#666"/></svg>
              </th>
              <th class="font-normal text-right pr-[5px] border-r border-[#e2e2e2]">Size</th>
              <th class="font-normal text-right pr-[5px] border-r border-[#e2e2e2]">Packed</th>
              <th class="font-normal pl-1.5 border-r border-[#e2e2e2]">Type</th>
              <th class="font-normal pl-1.5 border-r border-[#e2e2e2]">Modified</th>
              <th class="font-normal pl-1.5 border-r border-[#e2e2e2]">CRC32</th>
            </tr>
          </thead>
          <tbody>
            <tr class="h-[19px]">
              <td><div class="flex items-center gap-1 pl-2"><svg class="w-[13px] h-4" viewBox="0 0 13 16"><path d="M.5 .5H11V4L12.500 6V15.500H.5Z" fill="url(#gold)" stroke="#e0b860"/></svg>..</div></td>
              <td></td>
              <td></td>
              <td class="pl-1.5">File folder</td>
              <td></td>
              <td></td>
            </tr>
            <tr class="h-[19px]">
              <td><div class="flex items-center gap-0.5 pl-1.5"><svg class="size-4"><use href="#winrar"/></svg>sensapi.dll.7z</div></td>
              <td class="text-right pr-1.5">47,282</td>
              <td class="text-right pr-1.5">47,282</td>
              <td class="pl-1.5">WinRAR archive</td>
              <td class="pl-1.5">8/28/2024 10:1...</td>
              <td class="pl-1.5">1216A0FB</td>
            </tr>
            <tr class="h-[19px]">
              <td><div class="flex items-center gap-0.5 pl-1.5"><svg class="size-4"><use href="#winrar"/></svg>usysdiag.exe.dat.7z</div></td>
              <td class="text-right pr-1.5">56,538</td>
              <td class="text-right pr-1.5">56,538</td>
              <td class="pl-1.5">WinRAR archive</td>
              <td class="pl-1.5">8/28/2024 10:1...</td>
              <td class="pl-1.5">DA9DE4EC</td>
            </tr>
            <tr class="h-[19px] text-white">
              <td><div class="flex items-center pl-1.5"><div class="bg-[#1d64a8]"><svg class="size-4 opacity-50"><use href="#winrar"/></svg></div><span class="flex-1 pl-0.5 leading-[19px] bg-[#0078d7]">usysdiag.rar</span></div></td>
              <td class="text-right pr-1.5 bg-[#0078d7]">193,983</td>
              <td class="text-right pr-1.5 bg-[#0078d7]">193,983</td>
              <td class="pl-1.5 bg-[#0078d7]">WinRAR archive</td>
              <td class="pl-1.5 bg-[#0078d7]">8/28/2024 10:1...</td>
              <td class="pl-1.5 bg-[#0078d7]">970399FA</td>
            </tr>
          </tbody>
        </table>
      </div>
    </section>

    <!-- Watermark -->
    <div class="absolute right-12 bottom-1.5 flex items-center gap-1 text-[38px] leading-[64px] text-[#f0f0f0] font-['Liberation_Sans_Narrow','Roboto_Condensed','Open_Sans_Condensed',sans-serif] drop-shadow-[0_0_2px_#00000038]">
      <span>ANY</span>
      <svg width="56" height="62" viewBox="0 0 60 64" fill="none" stroke="#f3f3f3" stroke-width="4">
        <path d="M16 3L55 30V36L16 61V3Z"/><path d="M24 18L46 33L24 47Z" fill="#fff"/><path d="M9 11L4 9V59L12 62"/>
      </svg>
      <span>RUN</span>
    </div>
  </main>

  <!-- Taskbar -->
  <footer class="flex h-10 shrink-0 text-white bg-[linear-gradient(90deg,#001a24_359px,#222_359px)]">
    <button aria-label="Start" class="w-12 grid place-items-center"><svg width="16" height="16"><path d="M0 2.200L6.500 1.300V7.500H0ZM7.500 1.100L16 0V7.500H7.500ZM0 8.500H6.500V14.700L0 13.800ZM7.500 8.500H16V16L7.500 14.900Z" fill="#fff"/></svg></button>
    <label class="relative flex items-center w-72 pl-3 gap-2.5 bg-[#f3f3f3] border border-[#b8b8b8] text-[#333]">
      <svg width="17" height="17" fill="none" stroke="#222" stroke-width="1.300"><circle cx="10.500" cy="6" r="5.300"/><path d="M6.700 10L.5 16.500"/></svg>
      <input aria-label="Search" placeholder="Type here to search" class="w-40 pt-0.5 text-sm outline-none placeholder:text-[#3a3a3a]">
      <svg class="absolute right-0 top-0" width="78" height="38" viewBox="0 0 78 38">
        <circle cx="39" cy="40" r="22" fill="#5b8ff0"/>
        <path d="M39 18C50 17 59 24 61 36V38H53C49 36 53 30 49 28C45 30 43 26 45 23C41 22 39 20 39 18ZM23 25C27 21 31 19 37 18C38 22 35 24 36 28C31 31 28 30 23 25ZM27 33C33 29 41 31 43 38H29Z" fill="#5aa136"/>
        <use href="#heart" x="14" y="8" width="10" height="11" fill="#35b85c"/>
        <use href="#heart" x="33" y="2" width="13" height="13" fill="#f25a44"/>
        <use href="#heart" x="54" y="7" width="12" height="12" fill="#fcc238"/>
        <use href="#heart" x="4" y="23" width="11" height="12" fill="#b98ae0"/>
        <use href="#heart" x="63" y="24" width="10" height="10" fill="#3f9be8"/>
      </svg>
    </label>
    <button aria-label="Task View" class="w-12 grid place-items-center"><svg width="16" height="16" fill="none" stroke="#fff"><path d="M.5 0V2.500H10.500V0M.5 5.500H10.500V10.500H.5ZM.5 16V13.500H10.500V16M14.500 0V4M14.500 9V16"/><path d="M13 5.500H16V7.500H13Z" fill="#fff" stroke="none"/></svg></button>
    <div class="flex gap-px ml-[3px]">
      <button aria-label="Microsoft Edge" class="w-12 grid place-items-center"><svg class="size-6"><use href="#edge"/></svg></button>
      <button aria-label="File Explorer" class="relative w-12 grid place-items-center"><svg class="size-6"><use href="#explorer"/></svg><i class="absolute bottom-0 left-1 w-10 h-0.5 bg-[#76b9ed]"></i></button>
      <button aria-label="Firefox" class="w-12 grid place-items-center"><svg class="size-6"><use href="#firefox"/></svg></button>
      <button aria-label="WinRAR" class="w-12 grid place-items-center bg-[#474747] border-b-2 border-[#76b9ed]"><svg class="size-6"><use href="#winrar"/></svg></button>
    </div>
    <div class="ml-auto flex">
      <button aria-label="Show hidden icons" class="w-6 grid place-items-center"><svg width="12" height="7"><path d="M.5 6.500L6 1L11.500 6.500" fill="none" stroke="#fff" stroke-width="1.200"/></svg></button>
      <button aria-label="Meet Now" class="w-6 grid place-items-center"><svg width="12" height="16" fill="none" stroke="#fff"><path d="M1.500 4.500H7.500V11.500H1.500ZM7.500 7L10.500 5V11L7.500 9M2.500 2Q5.500 0 8.500 2M2.500 14Q5.500 16 8.500 14"/></svg></button>
      <button aria-label="Network" class="w-6 grid place-items-center"><svg width="16" height="14" fill="none" stroke="#fff"><path d="M5 1.500H15.500V9.500H3.500V5M9.500 9.500V12.500M6 12.500H13M.5 .5H4.500V4.500H.5Z"/></svg></button>
      <button aria-label="Volume" class="w-6 grid place-items-center"><svg width="17" height="14" fill="none" stroke="#fff"><path d="M.5 4.500H2.500L6.500 1V13L2.500 9.500H.5ZM8.500 5Q10 7 8.500 9M11 3Q14 7 11 11M13.500 1Q18 7 13.500 13"/></svg></button>
      <button class="w-16 leading-[17px] text-center pb-0.5">10:14 PM<br>8/28/2024</button>
      <button aria-label="Notifications" class="w-10 grid place-items-center"><svg width="16" height="16" fill="none" stroke="#fff"><path d="M.5 .5H15.500V12.500H10.500L8 15L5.500 12.500H.5Z"/></svg></button>
      <button aria-label="Show desktop" class="w-[5px] ml-2 border-l border-[#6a6a6a]"></button>
    </div>
  </footer>

</body>
</html>
